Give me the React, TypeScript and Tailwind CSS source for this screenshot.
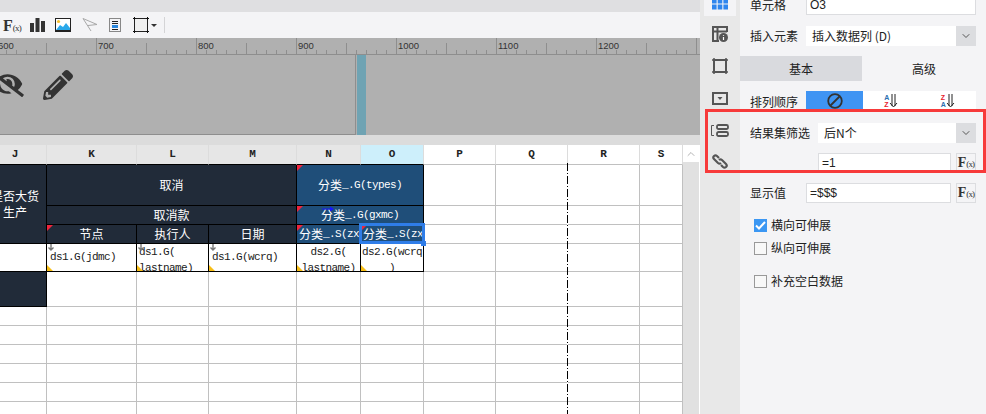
import { FaEyeSlash, FaPencilAlt } from 'react-icons/fa';
import { ChevronDown, ChevronUp } from 'lucide-react';

const mono = "font-['Liberation_Mono','Noto_Sans_CJK_SC',monospace]";
const cjk = "font-['Noto_Sans_CJK_SC','Noto_Sans',sans-serif]";

const gridLine = 'border-r border-b border-[#c0c0c0]';
const dark = 'border-r border-b border-black bg-[#212b39] text-white';
const blue = 'border-r border-b border-black bg-[#1f4e79] text-white';
const data = 'border-r border-b border-black bg-white text-[#1a1a1a]';
const code = 'text-[11px] tracking-[-0.6px]';

function Fx({ size = 'text-[15px]' }: { size?: string }) {
  return (
    <span className={`font-['Liberation_Serif',serif] font-bold leading-none text-[#333] ${size}`}>
      F<span className="text-[9px] font-normal tracking-[-0.8px]">(x)</span>
    </span>
  );
}

function Toolbar() {
  return (
    <div className="flex h-[26px] items-center bg-[#f4f4f6] pl-[3px]">
      <span className="w-[17px]">
        <Fx size="text-[16px]" />
      </span>
      <svg className="ml-[10px]" width="15" height="14" viewBox="0 0 15 14" fill="#333">
        <rect x="0" y="5" width="4" height="9" />
        <rect x="5.5" y="0" width="4" height="14" />
        <rect x="11" y="3" width="4" height="11" />
      </svg>
      <svg className="ml-[10px]" width="17" height="15" viewBox="0 0 17 15">
        <rect x="0.5" y="0.5" width="15" height="13" fill="#fff" stroke="#222" />
        <rect x="0" y="12" width="16" height="2" fill="#222" />
        <circle cx="3.5" cy="3.5" r="1.6" fill="#f8c12e" />
        <path d="M1 12 L5 7 L8 9 L11 5 L15 10 V12 Z" fill="#2aa8ea" />
      </svg>
      <svg className="ml-[10px]" width="16" height="14" viewBox="0 0 16 14" fill="none" stroke="#a8a8a8">
        <path d="M1 0.5 L15 6.5 L6 7.5 M1 0.5 L9 13" />
      </svg>
      <svg className="ml-[11px]" width="13" height="15" viewBox="0 0 13 15">
        <rect x="0.5" y="0.5" width="11" height="13" fill="#f4f4f6" stroke="#888" />
        <path d="M3 3.5 H9 M3 5.5 H9 M3 11.5 H9" stroke="#222" />
        <rect x="3" y="7" width="6" height="3" fill="#2a86dc" />
      </svg>
      <svg className="ml-[11px]" width="16" height="16" viewBox="0 0 16 16">
        <rect x="1.5" y="1.5" width="13" height="13" fill="#f0f0f0" stroke="#222" />
        <path d="M0 1.5 H3 M1.5 0 V3 M13 1.5 H16 M14.5 0 V3 M0 14.5 H3 M1.5 13 V16 M13 14.5 H16 M14.5 13 V16" stroke="#111" />
      </svg>
      <span className="ml-[2px] h-0 w-0 border-x-[3px] border-t-[3px] border-x-transparent border-t-[#333]" />
      <span className="ml-[7px] h-[16px] w-px bg-[#d4d4d6]" />
    </div>
  );
}

function Ruler() {
  const ticks = Array.from({ length: 72 }, (_, i) => i * 10 - 4);
  return (
    <svg width="700" height="17" className="block bg-[#b0b0b0]">
      {ticks.map((x, i) => {
        const h = i % 10 === 0 ? 16 : i % 5 === 0 ? 11 : 4;
        return <line key={x} x1={x + 0.5} x2={x + 0.5} y1={16 - h} y2={16} stroke="#8e8e8e" />;
      })}
      <line x1="0" x2="700" y1="16.5" y2="16.5" stroke="#8e8e8e" />
      {[600, 700, 800, 900, 1000, 1100, 1200].map((n, i) => (
        <text key={n} x={i * 100 - 2} y="11" fontSize="9.5" fill="#333" fontFamily="Liberation Sans">
          {n}
        </text>
      ))}
    </svg>
  );
}

function Canvas() {
  return (
    <div className="flex h-[80px] bg-[#b0b0b0]">
      <div className="flex h-full w-[356px] items-start gap-[19px] border-r border-b border-[#8e8e8e] pt-[15px] text-[#333]">
        <FaEyeSlash className="-ml-[9px] mt-[1px] h-[26px] w-[33px]" />
        <FaPencilAlt className="h-[30px] w-[30px]" />
      </div>
      <div className="ml-px h-full w-[9px] bg-[#6fa3b3]" />
    </div>
  );
}

function HeaderCell({ label, tone }: { label: string; tone: 'gray' | 'sky' | 'white' }) {
  const bg = tone === 'gray' ? 'bg-[#e6e6e6]' : tone === 'sky' ? 'bg-[#cdeffb]' : 'bg-white';
  const line = tone === 'white' ? 'border-[#c0c0c0]' : 'border-black';
  return (
    <div className={`flex items-center justify-center border-b border-r border-r-[#dcdcdc] ${line} ${bg} text-[11px] font-bold text-[#222]`}>
      {label}
    </div>
  );
}

function RedMark() {
  return <span className="absolute left-0 top-0 h-0 w-0 border-r-[6px] border-t-[6px] border-r-transparent border-t-[#f0243c]" />;
}

function DataMarks({ arrow = true }: { arrow?: boolean }) {
  return (
    <>
      {arrow && (
        <svg className="absolute left-[1px] top-0" width="6" height="7" viewBox="0 0 6 7" fill="none" stroke="#777" strokeWidth="1.4">
          <path d="M3 0 V6 M0.5 3.5 L3 6 L5.5 3.5" />
        </svg>
      )}
      <span className="absolute bottom-0 left-0 h-0 w-0 border-r-[6px] border-b-[6px] border-r-transparent border-b-[#f7be16]" />
    </>
  );
}

function Blanks({ n = 4 }: { n?: number }) {
  return (
    <>
      {Array.from({ length: n }, (_, i) => (
        <div key={i} className={gridLine} />
      ))}
    </>
  );
}

function Sheet() {
  return (
    <div className={`relative flex-1 overflow-hidden bg-white ${mono}`}>
      <div className="-ml-[16px] grid grid-cols-[63px_90px_72px_88px_64px_63px_72px_72px_72px_43px] grid-rows-[20px_41px_19px_19px_28px_35px_19px_19px_19px_19px_19px_19px]">
        <HeaderCell label="J" tone="gray" />
        <HeaderCell label="K" tone="gray" />
        <HeaderCell label="L" tone="gray" />
        <HeaderCell label="M" tone="gray" />
        <HeaderCell label="N" tone="gray" />
        <HeaderCell label="O" tone="sky" />
        <HeaderCell label="P" tone="white" />
        <HeaderCell label="Q" tone="white" />
        <HeaderCell label="R" tone="white" />
        <HeaderCell label="S" tone="white" />

        <div className={`row-span-3 flex items-center justify-center whitespace-nowrap text-center text-[12px] leading-[16px] ${cjk} ${dark}`}>
          是否大货
          <br />
          生产
        </div>
        <div className={`col-span-3 flex items-center justify-center text-[12px] ${cjk} ${dark}`}>取消</div>
        <div className={`relative col-span-2 flex items-center justify-center ${code} ${blue}`}>
          <RedMark />
          <span className={`${cjk} text-[12px] tracking-normal`}>分类</span>_.G(types)
        </div>
        <Blanks />

        <div className={`col-span-3 flex items-center justify-center text-[12px] ${cjk} ${dark}`}>取消款</div>
        <div className={`relative col-span-2 flex items-center justify-center ${code} ${blue}`}>
          <RedMark />
          <svg className="absolute left-[25px] top-[0px]" width="12" height="6" viewBox="0 0 12 6" fill="#1515ff">
            <path d="M0 2.5 H8 V0.5 L12 3 L8 5.5 V3.5 H0 Z" />
          </svg>
          <span className={`${cjk} text-[12px] tracking-normal`}>分类</span>_.G(gxmc)
        </div>
        <Blanks />

        <div className={`relative flex items-center justify-center text-[12px] ${cjk} ${dark}`}>
          <RedMark />
          节点
        </div>
        <div className={`flex items-center justify-center text-[12px] ${cjk} ${dark}`}>执行人</div>
        <div className={`flex items-center justify-center text-[12px] ${cjk} ${dark}`}>日期</div>
        <div className={`relative flex items-center overflow-hidden whitespace-nowrap pl-[2px] ${code} ${blue}`}>
          <RedMark />
          <span className={`${cjk} text-[12px] tracking-normal`}>分类</span>_.S(zx
        </div>
        <div className={`relative flex items-center overflow-hidden whitespace-nowrap pl-[2px] ${code} ${blue}`}>
          <RedMark />
          <span className={`${cjk} text-[12px] tracking-normal`}>分类</span>_.S(zx
        </div>
        <Blanks />

        <div className={data} />
        <div className={`relative flex items-center pl-[3px] ${code} ${data}`}>
          <DataMarks />
          ds1.G(jdmc)
        </div>
        <div className={`relative overflow-hidden pl-[2px] leading-[16px] ${code} ${data}`}>
          <DataMarks />
          ds1.G(
          <br />
          lastname)
        </div>
        <div className={`relative flex items-center pl-[3px] ${code} ${data}`}>
          <DataMarks />
          ds1.G(wcrq)
        </div>
        <div className={`relative overflow-hidden text-center leading-[16px] ${code} ${data}`}>
          <DataMarks arrow={false} />
          ds2.G(
          <br />
          lastname)
        </div>
        <div className={`relative overflow-hidden text-center leading-[16px] ${code} ${data}`}>
          <DataMarks arrow={false} />
          ds2.G(wcrq
          <br />)
        </div>
        <Blanks />

        <div className={dark} />
        <Blanks n={9} />
        {[0, 1, 2, 3, 4, 5].map((r) => (
          <Blanks key={r} n={10} />
        ))}
      </div>

      {/* page break line */}
      <div className="absolute bottom-0 left-[567px] top-[18px] w-px bg-[repeating-linear-gradient(to_bottom,#000_0_8px,#fff_8px_10px,#000_10px_11px,#fff_11px_13px)]" />
      {/* selected cell */}
      <div className="absolute left-[359px] top-[78px] h-[21px] w-[66px] border-[3px] border-[#2f7de8]" />
      <div className="absolute left-[421px] top-[96px] h-[5px] w-[5px] bg-[#2f7de8]" />
    </div>
  );
}

function ScrollBar() {
  return (
    <div className="flex w-[17px] flex-col border-r border-white bg-white">
      <div className="flex h-[17px] items-center justify-center">
        <ChevronUp className="h-[12px] w-[12px] text-[#9a9a9a]" strokeWidth={1.5} />
      </div>
      <div className="flex-1 bg-[#e1e1e1]" />
    </div>
  );
}

function SideIcons() {
  return (
    <div className="flex w-[40px] flex-col items-center bg-[#e8e8e8] text-[#555]">
      <div className="flex h-[16px] w-[32px] items-end justify-center bg-[#f4f4f6] pb-[6px]">
        <svg className="shrink-0" width="16" height="11" viewBox="0 0 16 11" fill="#2f86ee">
          <rect x="0" y="0" width="4.6" height="4.5" />
          <rect x="5.7" y="0" width="4.6" height="4.5" />
          <rect x="11.4" y="0" width="4.6" height="4.5" />
          <rect x="0" y="5.5" width="4.6" height="5" />
          <rect x="5.7" y="5.5" width="4.6" height="5" />
          <rect x="11.4" y="5.5" width="4.6" height="5" />
        </svg>
      </div>
      <svg className="mt-[10px]" width="16" height="16" viewBox="0 0 16 16" fill="none" stroke="#555" strokeWidth="2">
        <path d="M7 15 H1 V1 H15 V6 M1 5.5 H15 M5.5 1 V15" />
        <circle cx="11.5" cy="11.5" r="4.5" fill="#555" stroke="none" />
        <path d="M11.5 9 V9.8 M11.5 11 V14" stroke="#fff" strokeWidth="1.2" />
      </svg>
      <svg className="mt-[16px]" width="16" height="16" viewBox="0 0 16 16" fill="none" stroke="#555" strokeWidth="2">
        <rect x="2" y="2" width="12" height="12" />
        <path d="M0 2 H4 M2 0 V4 M12 2 H16 M14 0 V4 M0 14 H4 M2 12 V16 M12 14 H16 M14 12 V16" strokeWidth="1.5" />
      </svg>
      <svg className="mt-[18px]" width="16" height="13" viewBox="0 0 16 13" fill="none" stroke="#555" strokeWidth="2">
        <rect x="1" y="1" width="14" height="11" />
        <path d="M5.5 5 H10.5 L8 8 Z" fill="#555" stroke="none" />
      </svg>
      <svg className="mt-[19px]" width="18" height="13" viewBox="0 0 18 13" fill="none" stroke="#555">
        <rect x="6" y="1" width="11" height="4" rx="1.5" strokeWidth="1.8" />
        <rect x="6" y="8" width="11" height="4" rx="1.5" strokeWidth="1.8" />
        <path d="M3 1.5 H0.5 V11.5 H3" />
      </svg>
      <svg className="mt-[17px]" width="16" height="15" viewBox="0 0 16 15" fill="none" stroke="#555" strokeWidth="2.2">
        <path d="M7 4 L5 2 Q3.5 0.8 2 2 Q0.5 3.5 2 5 L6 9 Q7.5 10.2 9 9" />
        <path d="M9 11 L11 13 Q12.5 14.2 14 13 Q15.5 11.5 14 10 L10 6 Q8.5 4.8 7 6" />
      </svg>
    </div>
  );
}

function Label({ children, w = 'w-[56px]' }: { children: string; w?: string }) {
  return <span className={`shrink-0 text-[12px] leading-[18px] text-[#222] ${w}`}>{children}</span>;
}

function SelectBox({ value }: { value: string }) {
  return (
    <div className="flex h-[20px] flex-1 items-center bg-white pl-[6px] text-[12px] text-[#222]">
      <span className="flex-1">{value}</span>
      <span className="flex h-full w-[20px] items-center justify-center bg-[#dcdde0]">
        <ChevronDown className="h-[12px] w-[12px] text-[#555]" />
      </span>
    </div>
  );
}

function FormulaInput({ value }: { value: string }) {
  return (
    <>
      <div className="flex h-[20px] flex-1 items-center border border-[#dcdde0] bg-white pl-[3px] font-['Liberation_Sans',sans-serif] text-[12px] text-[#222]">
        {value}
      </div>
      <span className="ml-[5px] flex h-[20px] w-[20px] items-center justify-center border border-[#dcdde0] bg-[#f4f4f6]">
        <Fx size="text-[14px]" />
      </span>
    </>
  );
}

function SortIcon({ top, bottom, topColor, bottomColor }: { top: string; bottom: string; topColor: string; bottomColor: string }) {
  return (
    <span className="flex flex-1 items-center justify-center">
      <span className="flex flex-col font-['Liberation_Sans',sans-serif] text-[7px] font-bold leading-[7px]">
        <span className={topColor}>{top}</span>
        <span className={bottomColor}>{bottom}</span>
      </span>
      <svg width="9" height="14" viewBox="0 0 9 14" fill="none" stroke="#222">
        <path d="M3 0 V12 M6 0 V12 M1 9 L4.5 13 L8 9" />
      </svg>
    </span>
  );
}

function CheckRow({ label, checked, className }: { label: string; checked?: boolean; className: string }) {
  return (
    <div className={`flex h-[14px] items-center pl-[14px] text-[12px] text-[#222] ${className}`}>
      {checked ? (
        <span className="flex h-[13px] w-[13px] items-center justify-center bg-[#3b97f3]">
          <svg width="11" height="9" viewBox="0 0 11 9" fill="none" stroke="#fff" strokeWidth="2">
            <path d="M1 4.5 L4 7.5 L10 1" />
          </svg>
        </span>
      ) : (
        <span className="h-[13px] w-[13px] border border-[#999] bg-[#f8f8f8]" />
      )}
      <span className="ml-[4px]">{label}</span>
    </div>
  );
}

function Panel() {
  return (
    <div className={`relative flex h-[414px] flex-1 flex-col overflow-hidden bg-[#f4f4f6] ${cjk}`}>
      <div className="-mt-[5px] flex items-center px-[10px]">
        <Label>单元格</Label>
        <div className="flex h-[20px] flex-1 items-center border border-[#dcdde0] bg-white pl-[3px] font-['Liberation_Sans',sans-serif] text-[12px] text-[#222]">
          O3
        </div>
      </div>
      <div className="mt-[11px] flex items-center px-[10px]">
        <Label>插入元素</Label>
        <SelectBox value="插入数据列 (D)" />
      </div>
      <div className="mt-[10px] flex h-[25px] text-[12px] text-[#222]">
        <div className="flex w-[122px] items-center justify-center bg-[#d9dade]">基本</div>
        <div className="flex flex-1 items-center justify-center">高级</div>
      </div>
      <div className="mt-[10px] flex h-[20px] items-center px-[10px]">
        <Label w="w-[56px] pt-[2px]">排列顺序</Label>
        <div className="flex h-[20px] flex-1 bg-white">
          <span className="flex w-[57px] items-center justify-center bg-[#3f94f3]">
            <svg width="16" height="16" viewBox="0 0 16 16" fill="none" stroke="#333" strokeWidth="1.8">
              <circle cx="8" cy="8" r="6.8" />
              <path d="M3.5 12.5 L12.5 3.5" />
            </svg>
          </span>
          <SortIcon top="A" bottom="Z" topColor="text-[#2c6fb0]" bottomColor="text-[#e8202c]" />
          <SortIcon top="Z" bottom="A" topColor="text-[#e8202c]" bottomColor="text-[#2c6fb0]" />
        </div>
      </div>
      <div className="mt-[12px] flex items-center px-[10px]">
        <Label w="w-[68px]">结果集筛选</Label>
        <SelectBox value="后N个" />
      </div>
      <div className="mt-[10px] flex items-center pl-[78px] pr-[10px]">
        <FormulaInput value="=1" />
      </div>
      <div className="mt-[10px] flex items-center px-[10px]">
        <Label>显示值</Label>
        <FormulaInput value="=$$$" />
      </div>
      <CheckRow label="横向可伸展" checked className="mt-[15px]" />
      <CheckRow label="纵向可伸展" className="mt-[9px]" />
      <CheckRow label="补充空白数据" className="mt-[19px]" />
    </div>
  );
}

export default function App() {
  return (
    <div className="relative flex h-[414px] w-[986px] overflow-hidden bg-white">
      <div className="flex w-[700px] flex-col">
        <div className="h-[12px] bg-[#dfdfe1]" />
        <Toolbar />
        <Ruler />
        <Canvas />
        <div className="h-[10px] bg-[#dcdcdc]" />
        <div className="flex flex-1 overflow-hidden">
          <Sheet />
          <ScrollBar />
        </div>
      </div>
      <SideIcons />
      <Panel />
      {/* red annotation box, partly over the side icons */}
      <div className="absolute left-[705px] top-[109px] h-[64px] w-[281px] border-[3px] border-[#f73a3a]" />
    </div>
  );
}
